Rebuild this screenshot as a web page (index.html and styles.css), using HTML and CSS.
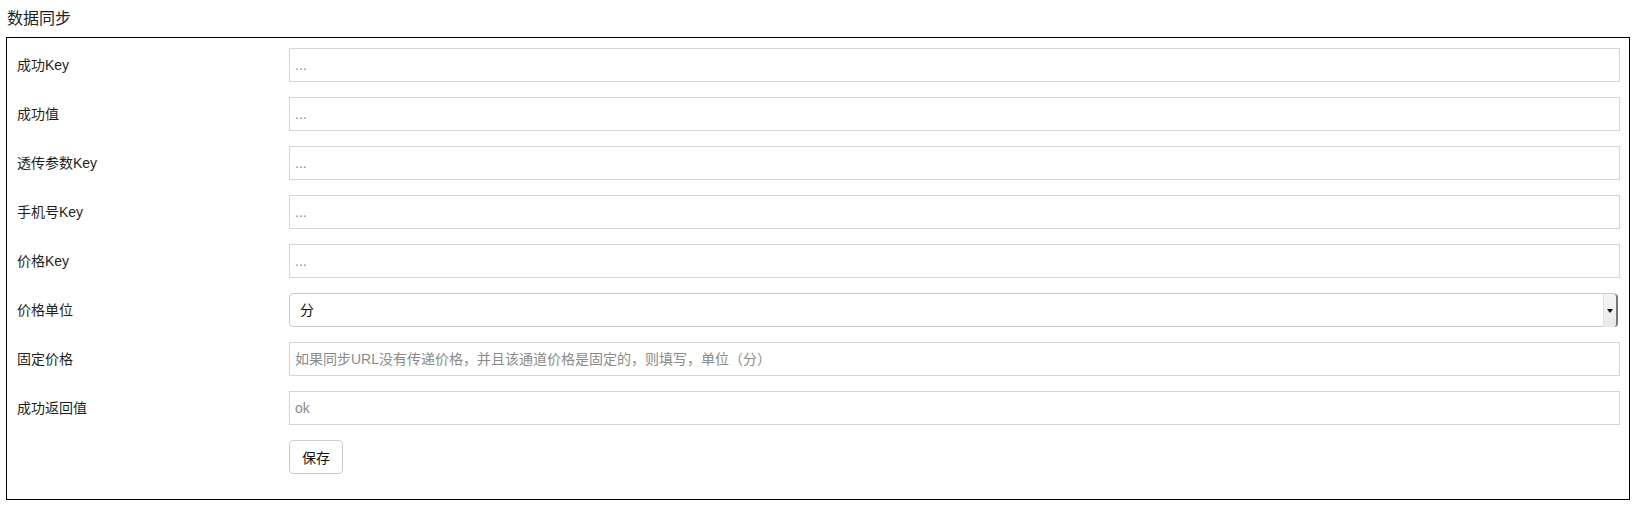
FILE: index.html
```html
<!DOCTYPE html>
<html lang="zh">
<head>
<meta charset="utf-8">
<title>数据同步</title>
<link rel="stylesheet" href="styles.css">
</head>
<body>
<h3 class="title">数据同步</h3>
<div class="panel">
  <form class="form">
    <label class="label">成功Key</label>
    <input class="field" type="text" placeholder="...">
    <label class="label">成功值</label>
    <input class="field" type="text" placeholder="...">
    <label class="label">透传参数Key</label>
    <input class="field" type="text" placeholder="...">
    <label class="label">手机号Key</label>
    <input class="field" type="text" placeholder="...">
    <label class="label">价格Key</label>
    <input class="field" type="text" placeholder="...">
    <label class="label">价格单位</label>
    <div class="select-wrap">
      <select class="select"><option>分</option><option>元</option></select>
      <span class="select-btn"><span class="caret"></span></span>
    </div>
    <label class="label">固定价格</label>
    <input class="field" type="text" placeholder="如果同步URL没有传递价格，并且该通道价格是固定的，则填写，单位（分）">
    <label class="label">成功返回值</label>
    <input class="field" type="text" placeholder="ok">
    <span></span>
    <div><button class="btn" type="button">保存</button></div>
  </form>
</div>
</body>
</html>
```
FILE: styles.css
```css
* { box-sizing: border-box; }
html, body { background: #fff; }
body {
  margin: 0;
  padding: 0 6px;
  font-family: "Liberation Sans", "Noto Sans CJK SC", sans-serif;
  font-size: 14px;
  color: #222;
}
.title {
  margin: 8px 0 7px 1px;
  font-size: 16px;
  line-height: 22px;
  font-weight: normal;
  color: #222;
}
.panel {
  border: 1px solid #000;
  padding: 10px 9px 25px 10px;
}
.form {
  display: grid;
  grid-template-columns: 272px 1fr;
  grid-auto-rows: 34px;
  row-gap: 15px;
  margin: 0;
}
.label {
  display: flex;
  align-items: center;
  font-size: 14px;
  color: #1e1e1e;
  padding-bottom: 2px;
}
.field {
  width: 100%;
  height: 34px;
  border: 1px solid #d4d4d4;
  border-radius: 0;
  padding: 0 5px;
  font-family: "Liberation Sans", "Noto Sans CJK SC", sans-serif;
  font-size: 14px;
  color: #555;
  background: #fff;
  outline: none;
}
.field::placeholder { color: #8a8a8a; }
.select-wrap {
  position: relative;
  width: calc(100% - 2px);
  height: 34px;
}
.select {
  -webkit-appearance: none;
  appearance: none;
  width: 100%;
  height: 34px;
  border: 1px solid #c8c8c8;
  border-radius: 4px;
  padding: 0 10px;
  font-family: "Liberation Sans", "Noto Sans CJK SC", sans-serif;
  font-size: 14px;
  color: #111;
  background: #fff;
  outline: none;
}
.select-btn {
  position: absolute;
  top: 1px;
  right: 0;
  width: 15px;
  height: 33px;
  background: linear-gradient(#f6f6f6, #e8e8e8);
  border-left: 1px solid #e0e0e0;
  border-right: 2px solid #777;
  border-radius: 0 4px 4px 0;
  display: flex;
  align-items: center;
  justify-content: center;
  pointer-events: none;
}
.caret {
  width: 0;
  height: 0;
  border-left: 3px solid transparent;
  border-right: 3px solid transparent;
  border-top: 4px solid #111;
}
.btn {
  height: 34px;
  padding: 0 12px;
  border: 1px solid #ccc;
  border-radius: 4px;
  background: #fff;
  font-family: "Liberation Sans", "Noto Sans CJK SC", sans-serif;
  font-size: 14px;
  color: #111;
}
```
